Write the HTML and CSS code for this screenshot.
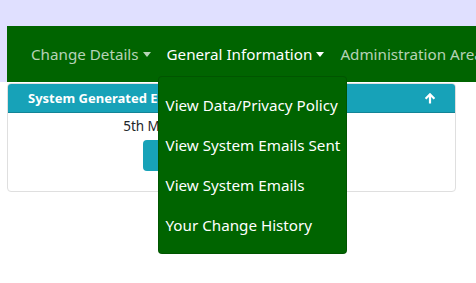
FILE: index.html
```html
<!DOCTYPE html>
<html lang="en">
<head>
    <meta charset="UTF-8">
    <title>System Emails</title>
    <link rel="stylesheet" href="styles.css">
</head>
<body>

<div class="header-wrap">
    <nav class="navbar">
        <ul class="nav">
            <li class="nav-item"><a class="nav-link" href="#">Change Details<span class="caret"></span></a></li>
            <li class="nav-item open">
                <a class="nav-link active" href="#">General Information<span class="caret"></span></a>
                <!-- Menu aberto -->
                <div class="dropdown-menu">
                    <a class="dropdown-item" href="#">View Data/Privacy Policy</a>
                    <a class="dropdown-item" href="#">View System Emails Sent</a>
                    <a class="dropdown-item" href="#">View System Emails</a>
                    <a class="dropdown-item" href="#">Your Change History</a>
                </div>
            </li>
            <li class="nav-item"><a class="nav-link" href="#">Administration Area</a></li>
        </ul>
    </nav>
</div>

<div class="content">
    <div class="card">
        <div class="card-header">
            <span class="card-title">System Generated Emails</span>
            <svg class="up-icon" width="12" height="12" viewBox="0 0 12 12">
                <path d="M6 0.8 L11.2 6 L9.6 7.5 L7.1 5 L7.1 11.4 L4.9 11.4 L4.9 5 L2.4 7.5 L0.8 6 Z" fill="#fff"/>
            </svg>
        </div>
        <div class="card-body">
            <p class="date">5th March 2024 - 11th March 2024</p>
            <button class="btn">View System Emails</button>
        </div>
    </div>
</div>

</body>
</html>
```

FILE: styles.css
```css
html, body {
    min-height: 100%;
}
body {
    margin: 0;
    padding: 0;
    min-height: 283px;
    font-family: "Noto Sans", "Open Sans", sans-serif;
    background-color: #FFFFFF;
    color: #212529;
    overflow: hidden;
}
.header-wrap {
    background-color: #E0E0FF; /* Lavanda */
    padding: 26px 0 0 7px;
}
.navbar {
    background-color: #006400;
    height: 56px;
    padding: 0 16px;
    display: flex;
    align-items: center;
}
.nav {
    list-style: none;
    margin: 0;
    padding: 0;
    display: flex;
    white-space: nowrap;
}
.nav-item {
    position: relative;
}
.nav-link {
    display: block;
    padding: 8px 8px;
    font-size: 15.2px;
    line-height: 24px;
    color: rgba(255, 255, 255, 0.72);
    text-decoration: none;
}
.nav-link.active {
    color: #FFFFFF;
}
.caret {
    display: inline-block;
    margin-left: 4px;
    vertical-align: 3px;
    border-top: 5px solid;
    border-left: 4px solid transparent;
    border-right: 4px solid transparent;
}
.dropdown-menu {
    position: absolute;
    top: 42px;
    left: -1px;
    z-index: 10;
    width: 187px;
    padding: 8px 0;
    background-color: #006400;
    border: 1px solid rgba(0, 0, 0, 0.15);
    border-radius: 4px;
}
.dropdown-item {
    display: block;
    padding: 8px 7px;
    font-size: 15.2px;
    line-height: 24px;
    color: #FFFFFF;
    text-decoration: none;
}
.content {
    padding: 1px 20px 0 7px;
}
.card {
    border: 1px solid #DFDFDF;
    border-radius: 4px;
    overflow: hidden;
}
.card-header {
    background-color: #17A2B8;
    border-bottom: 1px solid #138496;
    height: 28px;
    padding: 0 20px;
    display: flex;
    align-items: center;
    justify-content: space-between;
}
.card-title {
    font-size: 13px;
    font-weight: bold;
    color: #FFFFFF;
}
.up-icon {
    margin-right: -1px;
}
.card-body {
    padding: 3px 12px 20px;
    text-align: center;
}
.date {
    margin: 0 0 4px;
    font-size: 13.5px;
    line-height: 20px;
}
.btn {
    font-family: inherit;
    font-size: 15.2px;
    line-height: 24px;
    padding: 4px 19px 3px;
    background-color: #17A2B8;
    color: #FFFFFF;
    border: none;
    border-radius: 4px;
    cursor: pointer;
}
```
